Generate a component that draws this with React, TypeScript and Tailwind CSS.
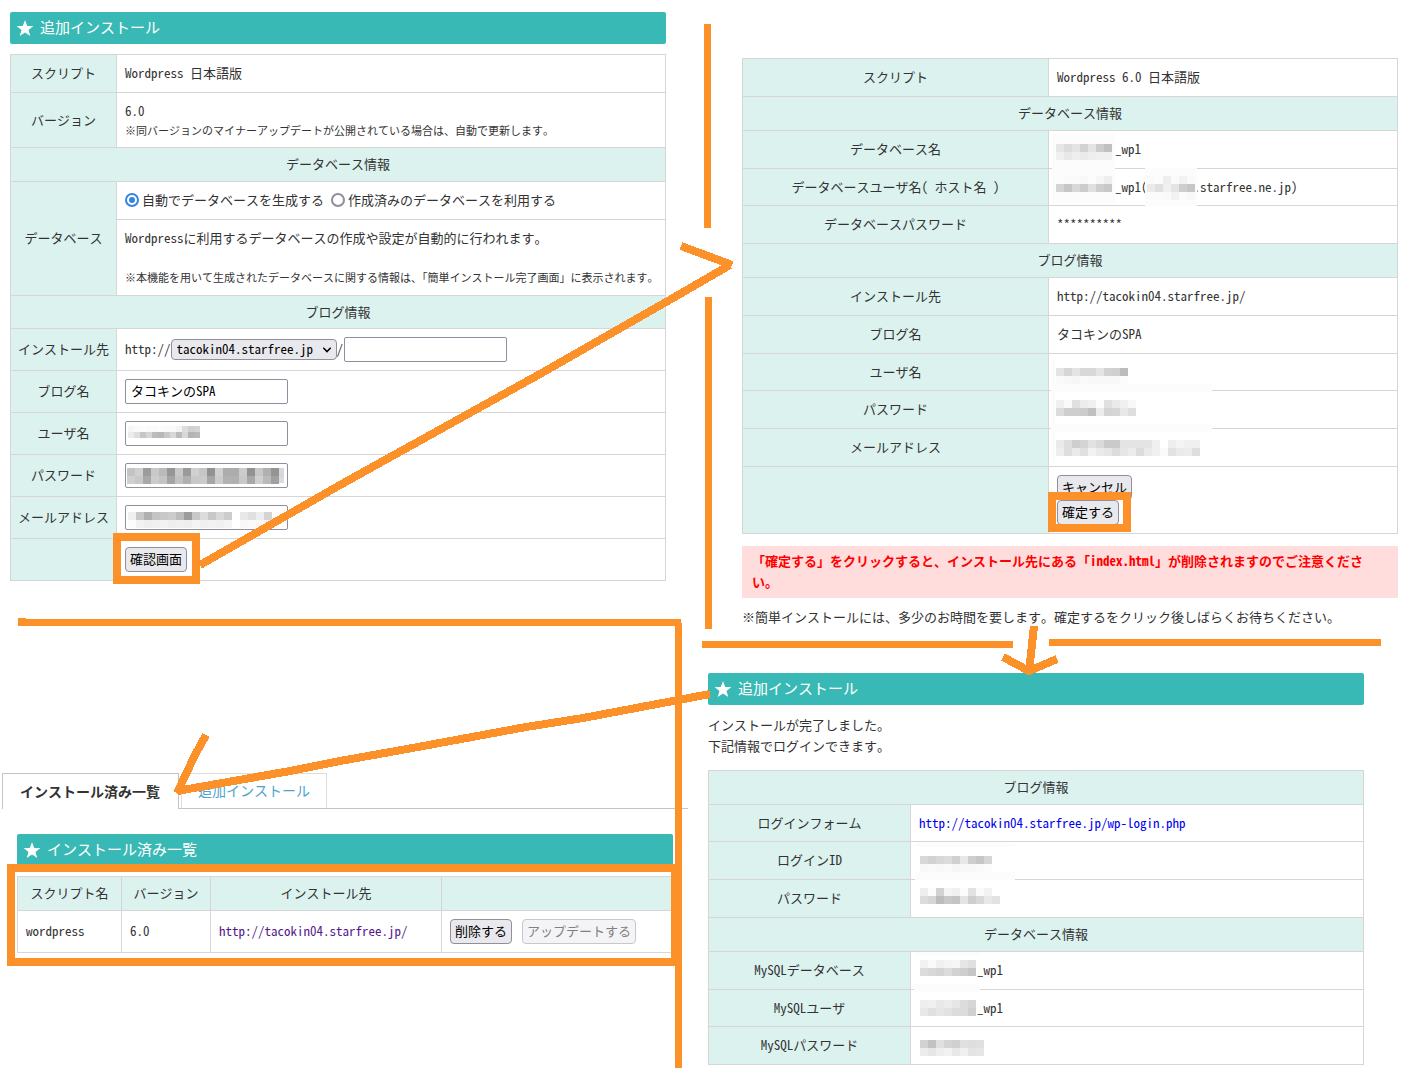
import React, { useState } from 'react';
import clsx from 'clsx';

const ORANGE = '#fc9129';

// Grey levels (hex byte per cell) of the mosaics that hide private values
interface MosaicProps {
  x: number;
  y: number;
  size?: number;
  rows: string[];
}

const MOSAICS: MosaicProps[] = [
  // install form
  { x: 128, y: 426, size: 6, rows: ['f6 fa fc fa fa fc fa fa f4 dd d0 d4', 'ec de c6 d6 bc b8 c8 d8 bc d8 b4 b8'] },
  {
    x: 127,
    y: 468,
    rows: [
      'c4 d0 9c c8 ba 96 c8 9a d0 c6 92 d0 ac ac cc 92 c8 b0 94',
      'd0 c8 a8 cc c4 a4 c2 b0 c8 ca a6 cc b2 b0 c8 a8 d0 ba a0',
    ],
  },
  { x: 279, y: 468, size: 5, rows: ['d8', 'd8', 'dc'] },
  {
    x: 128,
    y: 512,
    rows: [
      'f0 c8 b0 c4 c8 cc bc 9c c8 dc c8 d8 cc ff e8 e0 ee d4',
      'fc f2 ee f0 f2 ee f0 ee f4 f0 f2 f0 f4 ff f8 fa f8 f4',
    ],
  },
  // confirmation
  { x: 1056, y: 144, rows: ['e6 dc e4 d2 e4 cc c0', 'f0 e8 ee ea ee f0 f0'] },
  { x: 1056, y: 176, rows: ['fc fa fa f8 fc f6 ee', 'd4 c6 d8 cc e0 ce c8'] },
  { x: 1147, y: 176, rows: ['fa fc ee fa f2 fa', 'ea e0 f0 e4 ce c6', 'fb fb fa f2 fb f8'] },
  { x: 1056, y: 368, rows: ['e4 d6 e4 d8 d8 e4 d2 d0 bc', 'fa f8 f6 fa f8 f8 f8 f8 fc'] },
  { x: 1056, y: 400, rows: ['f0 fa e0 ec f0 fc e0 ea f0 f8', 'dc ce ce cc c0 ec d4 d6 e8 de'] },
  {
    x: 1056,
    y: 440,
    rows: [
      'ea de ce d4 e2 da ca ca e4 e4 e4 e4 f0 ff ee f4 f0 f0',
      'ee de ea e0 f2 ea e6 dc e6 ec dc ea f0 fa e2 ea ec de',
    ],
  },
  // login details
  { x: 920, y: 856, rows: ['d8 d2 d8 dc d0 e8 ce c6 d6', 'f8 fa f8 fa f6 f8 f8 fa fc'] },
  { x: 920, y: 888, rows: ['ee fc d2 f4 f0 fc e2 fa f2 ff', 'dc d6 bc c8 c4 e4 ce d8 e8 e2'] },
  { x: 920, y: 960, rows: ['f2 fa f0 f4 f6 e6 e0', 'dc d8 d4 dc d2 ce c6'] },
  { x: 920, y: 1000, rows: ['ee f0 e8 ec e6 dc d6', 'e8 e0 e6 e2 dc dc d0'] },
  { x: 920, y: 1040, rows: ['d2 c2 e0 d4 d0 e0 de e0', 'ec e6 ee f2 e8 f0 e4 e6'] },
];

// Pale areas round the mosaics: x, y, width, height
const PATCHES = [
  [1052, 134, 63, 70],
  [1145, 168, 52, 38],
  [1051, 360, 4, 102],
  [1051, 384, 161, 8],
  [1051, 424, 161, 8],
  [915, 843, 100, 4],
  [915, 872, 100, 8],
  [914, 952, 66, 4],
  [914, 984, 66, 8],
];

const Mosaic: React.FC<MosaicProps> = ({ x, y, size = 8, rows }) => (
  <g>
    {rows.map((row, r) =>
      row.split(' ').map((v, c) => (
        <rect key={`${r}-${c}`} x={x + c * size} y={y + r * size} width={size} height={size} fill={`#${v}${v}${v}`} />
      ))
    )}
  </g>
);

const Annotations = () => (
  <svg
    className="absolute top-0 left-0 w-[1414px] h-[1068px] pointer-events-none"
    viewBox="0 0 1414 1068"
    shapeRendering="crispEdges"
    aria-hidden="true"
  >
    {PATCHES.map(([x, y, width, height]) => (
      <rect key={`${x}-${y}`} x={x} y={y} width={width} height={height} fill="#fcfcfc" />
    ))}
    {MOSAICS.map((m) => (
      <Mosaic key={`${m.x}-${m.y}`} {...m} />
    ))}

    {/* Dividers between the steps */}
    <g fill={ORANGE}>
      <rect x="704" y="24" width="7" height="204" />
      <rect x="705" y="297" width="7" height="332" />
      <rect x="18" y="619" width="663" height="7" />
      <rect x="18" y="618" width="8" height="8" />
      <rect x="675" y="623" width="7" height="445" />
      <rect x="702" y="641" width="311" height="7" />
      <rect x="1049" y="639" width="332" height="7" />
    </g>

    {/* Frames */}
    <g fill="none" stroke={ORANGE} strokeWidth="8">
      <rect x="117" y="537" width="79" height="43" />
      <rect x="1052" y="496" width="75" height="32" />
      <rect x="11" y="868" width="664" height="94" />
    </g>

    {/* Arrows */}
    <g fill="none" stroke={ORANGE} strokeWidth="8" strokeLinejoin="round">
      <path d="M200 565 340 485 540 374 673 298 730 265" />
      <path d="M681 246 732 265" />
      <path d="M1034 626 1029 672" />
      <path d="M1003 657 1029 671 1057 659" />
      <path d="M710 694 583 718 526 727 407 749 340 761 290 771 177 791" />
      <path d="M206 735 195 755 177 793" />
    </g>
  </svg>
);

const Heading: React.FC<{ children: React.ReactNode }> = ({ children }) => (
  <h2 className="flex h-8 items-center gap-1.5 rounded-xs bg-[#39b9b5] px-1.5 text-[15px] font-medium text-white">
    <svg className="size-[18px]" viewBox="0 0 18 18" fill="currentColor" aria-hidden="true">
      <path d="M9 1 11.2 6.9 17.4 7.1 12.5 10.9 14.3 17 9 13.4 3.7 17 5.5 10.9 0.6 7.1 6.8 6.9Z" />
    </svg>
    <span className="pb-0.5">{children}</span>
  </h2>
);

const Table: React.FC<{ label: string; children: React.ReactNode }> = ({ label, children }) => (
  <table className="w-full table-fixed border-collapse" aria-label={label}>
    {children}
  </table>
);

interface CellProps {
  children?: React.ReactNode;
  className?: string;
  rowSpan?: number;
}

const Th: React.FC<CellProps> = ({ children, rowSpan }) => (
  <th
    scope="row"
    rowSpan={rowSpan}
    className="border border-[#d6d6d6] bg-[#dcf2ef] px-0 pt-0 pb-px text-center font-medium"
  >
    {children}
  </th>
);

const Td: React.FC<CellProps> = ({ children, className = 'pb-px' }) => (
  <td className={clsx('border border-[#d6d6d6] px-2 pt-0', className)}>{children}</td>
);

const Section: React.FC<{ tight?: boolean; children: React.ReactNode }> = ({ tight, children }) => (
  <tr className={tight ? 'h-[33px]' : 'h-[34px]'}>
    <th
      scope="colgroup"
      colSpan={2}
      className="border border-[#d6d6d6] bg-[#dcf2ef] px-0 pt-0 pb-px text-center font-medium"
    >
      {children}
    </th>
  </tr>
);

const Row: React.FC<{ label: string; tight?: boolean; children: React.ReactNode }> = ({ label, tight, children }) => (
  <tr className={tight ? 'h-[37px]' : 'h-[38px]'}>
    <Th>{label}</Th>
    <Td>{children}</Td>
  </tr>
);

const Button: React.FC<React.ButtonHTMLAttributes<HTMLButtonElement>> = (props) => (
  <button
    type="button"
    className="h-[25px] rounded border border-[#8f8f9d] bg-[#e9e9ed] px-1 pb-0.5 text-black disabled:border-[#c7c7ce] disabled:bg-[#f4f4f6] disabled:text-[#808080]"
    {...props}
  />
);

const TextInput: React.FC<React.InputHTMLAttributes<HTMLInputElement>> = (props) => (
  <input
    className="h-[25px] w-[163px] rounded-xs border border-[#8f8f9d] bg-white px-[5px] pb-0.5 text-black"
    {...props}
  />
);

const Radio: React.FC<React.InputHTMLAttributes<HTMLInputElement>> = (props) => (
  <input
    type="radio"
    className="size-3.5 appearance-none rounded-full border-2 border-[#8f8f9d] bg-white bg-clip-content p-0.5 checked:border-[#3584e4] checked:bg-[#3584e4]"
    {...props}
  />
);

// Room for a value that is hidden by a mosaic
const Hidden = () => <span className="inline-block w-[58px]" />;

const FORM_FIELDS = [
  { id: 'blog', label: 'ブログ名', type: 'text', value: 'タコキンのSPA' },
  { id: 'user', label: 'ユーザ名', type: 'text', value: '' },
  { id: 'pass', label: 'パスワード', type: 'password', value: '' },
  { id: 'mail', label: 'メールアドレス', type: 'text', value: '' },
];

const InstallForm = () => {
  const [auto, setAuto] = useState(true);

  return (
    <section className="flex flex-col gap-2.5 pt-3 pr-[41px] pl-2.5">
      <Heading>追加インストール</Heading>
      <Table label="追加インストール">
        <colgroup>
          <col className="w-[106px]" />
          <col />
        </colgroup>
        <tbody>
          <Row label="スクリプト">Wordpress 日本語版</Row>
          <tr className="h-[55px]">
            <Th>バージョン</Th>
            <Td>
              <p>6.0</p>
              <p className="text-[11px] leading-[18px] whitespace-nowrap">
                ※同バージョンのマイナーアップデートが公開されている場合は、自動で更新します。
              </p>
            </Td>
          </tr>
          <Section>データベース情報</Section>
          <tr className="h-[38px]">
            <Th rowSpan={2}>データベース</Th>
            <Td>
              <div className="flex gap-[7px]">
                <label className="flex items-center gap-[3px]">
                  <Radio name="db" checked={auto} onChange={() => setAuto(true)} />
                  自動でデータベースを生成する
                </label>
                <label className="flex items-center gap-[3px]">
                  <Radio name="db" checked={!auto} onChange={() => setAuto(false)} />
                  作成済みのデータベースを利用する
                </label>
              </div>
            </Td>
          </tr>
          <tr className="h-[76px]">
            <Td>
              <p className="mb-5">Wordpressに利用するデータベースの作成や設定が自動的に行われます。</p>
              <p className="text-[11px] leading-[18px] whitespace-nowrap">
                ※本機能を用いて生成されたデータベースに関する情報は、「簡単インストール完了画面」に表示されます。
              </p>
            </Td>
          </tr>
          <Section tight>ブログ情報</Section>
          <tr className="h-[42px]">
            <Th>
              <label htmlFor="path">インストール先</label>
            </Th>
            <Td className="pb-0">
              <div className="flex items-center">
                <span className="pb-0.5">http://</span>
                <span className="relative flex">
                  <select
                    aria-label="ドメイン"
                    className="h-[21px] w-[166px] appearance-none rounded border border-[#8f8f9d] bg-[#e9e9ed] pb-0.5 pl-[5px] leading-4 text-black"
                  >
                    <option>tacokin04.starfree.jp</option>
                  </select>
                  <svg
                    className="pointer-events-none absolute top-2 right-1.5 h-1.5 w-2"
                    viewBox="0 0 8 6"
                    fill="none"
                    stroke="#000"
                    strokeWidth="1.5"
                    aria-hidden="true"
                  >
                    <path d="M0.3 0.8 4 4.6 7.7 0.8" />
                  </svg>
                </span>
                <span className="w-[7px] pb-0.5">/</span>
                <TextInput id="path" type="text" />
              </div>
            </Td>
          </tr>
          {FORM_FIELDS.map((f) => (
            <tr key={f.id} className="h-[42px]">
              <Th>
                <label htmlFor={f.id}>{f.label}</label>
              </Th>
              <Td className="pb-0">
                <TextInput id={f.id} type={f.type} defaultValue={f.value} />
              </Td>
            </tr>
          ))}
          <tr className="h-[42px]">
            <Th />
            <Td className="pb-0">
              <Button>確認画面</Button>
            </Td>
          </tr>
        </tbody>
      </Table>
    </section>
  );
};

const Confirmation = () => (
  <section className="pt-[58px] pr-4 pl-[35px]">
    <Table label="インストール内容の確認">
      <colgroup>
        <col className="w-[306px]" />
        <col />
      </colgroup>
      <tbody>
        <Row label="スクリプト">Wordpress 6.0 日本語版</Row>
        <Section>データベース情報</Section>
        <Row label="データベース名">
          <Hidden />
          _wp1
        </Row>
        <Row label="データベースユーザ名( ホスト名 )" tight>
          <Hidden />
          _wp1(
          <span className="inline-block w-[46px]" />
          .starfree.ne.jp)
        </Row>
        <Row label="データベースパスワード">**********</Row>
        <Section>ブログ情報</Section>
        <Row label="インストール先">http://tacokin04.starfree.jp/</Row>
        <Row label="ブログ名">タコキンのSPA</Row>
        <Row label="ユーザ名" tight>
          <Hidden />
        </Row>
        <Row label="パスワード">
          <Hidden />
        </Row>
        <Row label="メールアドレス">
          <Hidden />
        </Row>
        <tr className="h-[67px]">
          <Th />
          <Td className="pb-0">
            <div className="flex flex-col items-start">
              <Button>キャンセル</Button>
              <Button>確定する</Button>
            </div>
          </Td>
        </tr>
      </tbody>
    </Table>
    <p className="mt-3 bg-[#ffdddd] px-2.5 pt-1 pb-1.5 leading-[21px] font-bold text-[#ff0000]">
      「確定する」をクリックすると、インストール先にある「index.html」が削除されますのでご注意ください。
    </p>
    <p className="mt-2 leading-[21px]">
      ※簡単インストールには、多少のお時間を要します。確定するをクリック後しばらくお待ちください。
    </p>
  </section>
);

const InstalledList = () => (
  <section className="pr-[19px] pl-0.5">
    <div className="flex h-9 items-stretch text-sm" role="tablist">
      <button
        type="button"
        role="tab"
        aria-selected="true"
        className="w-[177px] border border-b-0 border-[#c4c4c4] pr-px pb-0.5 text-center font-bold"
      >
        インストール済み一覧
      </button>
      <div className="flex flex-1 border-b border-[#c4c4c4] pl-0.5">
        <button
          type="button"
          role="tab"
          aria-selected="false"
          className="w-[146px] border border-b-0 border-[#dddddd] pb-0.5 text-center text-[#4ba3cd]"
        >
          追加インストール
        </button>
      </div>
    </div>
    <div className="flex flex-col gap-2.5 pt-[25px] pr-[15px] pl-[15px]">
      <Heading>インストール済み一覧</Heading>
      <Table label="インストール済み一覧">
        <colgroup>
          <col className="w-[104px]" />
          <col className="w-[89px]" />
          <col className="w-[231px]" />
          <col />
        </colgroup>
        <tbody>
          <tr className="h-[34px]">
            <Th>スクリプト名</Th>
            <Th>バージョン</Th>
            <Th>インストール先</Th>
            <Th />
          </tr>
          <tr className="h-[42px]">
            <Td>wordpress</Td>
            <Td>6.0</Td>
            <Td>
              <a href="#site" className="text-[#551a8b]">
                http://tacokin04.starfree.jp/
              </a>
            </Td>
            <Td className="pb-0">
              <div className="flex gap-2.5">
                <Button>削除する</Button>
                <Button disabled>アップデートする</Button>
              </div>
            </Td>
          </tr>
        </tbody>
      </Table>
    </div>
  </section>
);

const Complete = () => (
  <section className="pr-[50px] pl-px">
    <Heading>追加インストール</Heading>
    <p className="mt-[9px] mb-3.5 leading-[21px]">
      インストールが完了しました。
      <br />
      下記情報でログインできます。
    </p>
    <Table label="ログイン情報">
      <colgroup>
        <col className="w-[202px]" />
        <col />
      </colgroup>
      <tbody>
        <Section>ブログ情報</Section>
        <Row label="ログインフォーム" tight>
          <a href="#login" className="text-[#0000ee]">
            http://tacokin04.starfree.jp/wp-login.php
          </a>
        </Row>
        <Row label="ログインID">
          <Hidden />
        </Row>
        <Row label="パスワード">
          <Hidden />
        </Row>
        <Section>データベース情報</Section>
        <Row label="MySQLデータベース">
          <Hidden />
          _wp1
        </Row>
        <Row label="MySQLユーザ" tight>
          <Hidden />
          _wp1
        </Row>
        <Row label="MySQLパスワード">
          <Hidden />
        </Row>
      </tbody>
    </Table>
  </section>
);

export default function App() {
  return (
    <main className="relative flex min-h-screen overflow-hidden bg-white font-['Noto_Sans_Mono_CJK_JP','Noto_Sans_CJK_JP',sans-serif] text-[13px] leading-5 text-[#333333]">
      <div className="flex w-1/2 flex-col gap-48">
        <InstallForm />
        <InstalledList />
      </div>
      <div className="flex w-1/2 flex-col gap-[46px]">
        <Confirmation />
        <Complete />
      </div>
      <Annotations />
    </main>
  );
}
